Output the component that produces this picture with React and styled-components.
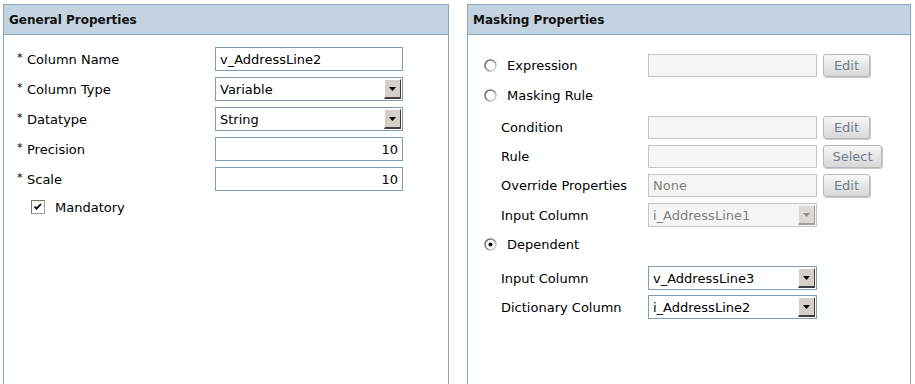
import React from "react";
import styled, { createGlobalStyle } from "styled-components";

const GlobalStyle = createGlobalStyle`
  html, body {
    margin: 0;
    padding: 0;
    background: #ffffff;
    overflow: hidden;
  }
  body {
    font-family: "DejaVu Sans", Verdana, sans-serif;
    font-size: 13px;
    color: #000;
  }
`;

const Page = styled.div`
  display: flex;
  gap: 18px;
  padding: 4px 0 0 3px;
  width: 915px;
  height: 384px;
  box-sizing: border-box;
  overflow: hidden;
`;

const Panel = styled.section`
  width: ${(p) => p.$width}px;
  height: 400px;
  flex-shrink: 0;
  box-sizing: border-box;
  border: 1px solid #8ca6c0;
  display: flex;
  flex-direction: column;
`;

const PanelHeader = styled.div`
  height: 29px;
  background: #c4d3e2;
  border-bottom: 1px solid #8ca6c0;
  display: flex;
  align-items: center;
  padding-left: 5px;
  font-weight: bold;
  font-size: 12px;
  color: #111;
`;

const LeftBody = styled.div`
  padding: 12px 0 0 13px;
  display: flex;
  flex-direction: column;
  gap: 6px;
`;

const FieldRow = styled.div`
  display: grid;
  grid-template-columns: 198px 188px;
  align-items: center;
  height: 24px;
`;

const Label = styled.label`
  display: flex;
  align-items: center;
  white-space: nowrap;
`;

const Star = styled.span`
  font-size: 11px;
  width: 10px;
  position: relative;
  top: -2px;
`;

const TextBox = styled.div`
  height: ${(p) => p.$h || 24}px;
  box-sizing: border-box;
  border: 1px solid ${(p) => (p.$disabled ? "#c6c6c6" : "#7f9db9")};
  background: ${(p) => (p.$disabled ? "#f5f5f5" : "#fff")};
  color: ${(p) => (p.$disabled ? "#808080" : "#000")};
  display: flex;
  align-items: center;
  justify-content: ${(p) => (p.$right ? "flex-end" : "flex-start")};
  padding: 0 4px;
  width: ${(p) => p.$width || 188}px;
`;

const SelectBox = styled.div`
  height: 24px;
  width: ${(p) => p.$width || 188}px;
  box-sizing: border-box;
  border: 1px solid ${(p) => (p.$disabled ? "#c6c6c6" : "#7f9db9")};
  background: ${(p) => (p.$disabled ? "#f5f5f5" : "#fff")};
  color: ${(p) => (p.$disabled ? "#808080" : "#000")};
  display: flex;
  align-items: stretch;
`;

const SelectText = styled.span`
  flex: 1;
  display: flex;
  align-items: center;
  padding-left: 4px;
`;

const ArrowButton = styled.span`
  width: 17px;
  margin: 1px;
  box-sizing: border-box;
  background: ${(p) => (p.$disabled ? "#dcdad5" : "#d4d0c8")};
  border-top: 1px solid ${(p) => (p.$disabled ? "#f2f2f2" : "#ffffff")};
  border-left: 1px solid ${(p) => (p.$disabled ? "#f2f2f2" : "#ffffff")};
  border-right: 1px solid ${(p) => (p.$disabled ? "#a0a0a0" : "#404040")};
  border-bottom: 2px solid ${(p) => (p.$disabled ? "#a0a0a0" : "#404040")};
  display: flex;
  align-items: center;
  justify-content: center;
`;

const CheckRow = styled.div`
  display: flex;
  align-items: center;
  gap: 10px;
  margin: 2px 0 0 14px;
  height: 16px;
`;

const RightBody = styled.div`
  padding: 19px 0 0 16px;
  display: flex;
  flex-direction: column;
`;

const MaskRow = styled.div`
  display: grid;
  grid-template-columns: ${(p) => (p.$sub ? "141px" : "158px")} 169px auto;
  column-gap: 6px;
  align-items: center;
  height: ${(p) => p.$h || 23}px;
  margin-top: ${(p) => p.$mt || 0}px;
  padding-left: ${(p) => (p.$sub ? 17 : 0)}px;
`;

const RadioLabel = styled.label`
  display: flex;
  align-items: center;
  gap: 10px;
  white-space: nowrap;
`;

const Button = styled.button`
  height: 23px;
  width: ${(p) => p.$width}px;
  font-family: inherit;
  font-size: 13px;
  color: #6f7c8e;
  border: 1px solid #b8b8b8;
  border-radius: 3px;
  background: linear-gradient(#f7f7f7, #e4e4e4 60%, #d8d8d8);
  box-shadow: 1px 1px 0 #c8c8c8;
  padding: 0;
  justify-self: start;
`;

const Arrow = ({ disabled }) => (
  <svg width="7" height="4" viewBox="0 0 7 4">
    <path d="M0 0h7L3.5 4z" fill={disabled ? "#8a8a8a" : "#000"} />
  </svg>
);

const Select = ({ value, disabled, width }) => (
  <SelectBox $disabled={disabled} $width={width}>
    <SelectText>{value}</SelectText>
    <ArrowButton $disabled={disabled}>
      <Arrow disabled={disabled} />
    </ArrowButton>
  </SelectBox>
);

const Radio = ({ checked }) => (
  <svg width="13" height="13" viewBox="0 0 13 13">
    <defs>
      <linearGradient id="rg" x1="0" y1="0" x2="1" y2="1">
        <stop offset="0" stopColor="#5a5a5a" />
        <stop offset="0.55" stopColor="#9a9a9a" />
        <stop offset="1" stopColor="#f0f0f0" />
      </linearGradient>
    </defs>
    <circle cx="6.5" cy="6.5" r="5.5" fill="#fff" stroke="url(#rg)" strokeWidth="1.6" />
    {checked && <circle cx="6.5" cy="6.5" r="2" fill="#000" />}
  </svg>
);

const Checkbox = () => (
  <svg width="14" height="14" viewBox="0 0 14 14">
    <rect x="0.5" y="0.5" width="13" height="13" fill="#fff" stroke="#a09a8c" />
    <path d="M0.5 13.5V0.5h13" fill="none" stroke="#7a7468" />
    <path d="M3.5 6.5l2 2.2 4.5-4.7" fill="none" stroke="#000" strokeWidth="1.8" />
  </svg>
);

const generalFields = [
  { label: "Column Name", kind: "text", value: "v_AddressLine2" },
  { label: "Column Type", kind: "select", value: "Variable" },
  { label: "Datatype", kind: "select", value: "String" },
  { label: "Precision", kind: "number", value: "10" },
  { label: "Scale", kind: "number", value: "10" },
];

export default function App() {
  return (
    <>
      <GlobalStyle />
      <Page>
        <Panel $width={446}>
          <PanelHeader>General Properties</PanelHeader>
          <LeftBody>
            {generalFields.map((f) => (
              <FieldRow key={f.label}>
                <Label>
                  <Star>*</Star>
                  {f.label}
                </Label>
                {f.kind === "select" ? (
                  <Select value={f.value} />
                ) : (
                  <TextBox $right={f.kind === "number"}>{f.value}</TextBox>
                )}
              </FieldRow>
            ))}
            <CheckRow>
              <Checkbox />
              <span>Mandatory</span>
            </CheckRow>
          </LeftBody>
        </Panel>

        <Panel $width={444}>
          <PanelHeader>Masking Properties</PanelHeader>
          <RightBody>
            <MaskRow>
              <RadioLabel>
                <Radio />
                Expression
              </RadioLabel>
              <TextBox $disabled $width={169} $h={23} />
              <Button $width={47}>Edit</Button>
            </MaskRow>
            <MaskRow $mt={7}>
              <RadioLabel>
                <Radio />
                Masking Rule
              </RadioLabel>
            </MaskRow>
            <MaskRow $sub $mt={9}>
              <span>Condition</span>
              <TextBox $disabled $width={169} $h={23} />
              <Button $width={47}>Edit</Button>
            </MaskRow>
            <MaskRow $sub $mt={6}>
              <span>Rule</span>
              <TextBox $disabled $width={169} $h={23} />
              <Button $width={59}>Select</Button>
            </MaskRow>
            <MaskRow $sub $mt={6}>
              <span>Override Properties</span>
              <TextBox $disabled $width={169} $h={23}>None</TextBox>
              <Button $width={47}>Edit</Button>
            </MaskRow>
            <MaskRow $sub $mt={6} $h={24}>
              <span>Input Column</span>
              <Select value="i_AddressLine1" disabled width={169} />
            </MaskRow>
            <MaskRow $mt={6}>
              <RadioLabel>
                <Radio checked />
                Dependent
              </RadioLabel>
            </MaskRow>
            <MaskRow $sub $mt={10} $h={24}>
              <span>Input Column</span>
              <Select value="v_AddressLine3" width={169} />
            </MaskRow>
            <MaskRow $sub $mt={5} $h={24}>
              <span>Dictionary Column</span>
              <Select value="i_AddressLine2" width={169} />
            </MaskRow>
          </RightBody>
        </Panel>
      </Page>
    </>
  );
}
